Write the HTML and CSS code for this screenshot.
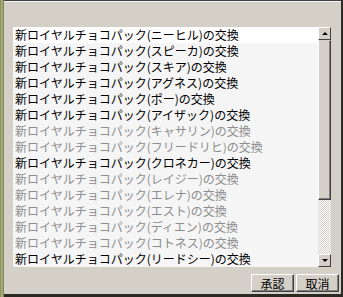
FILE: index.html
```html
<!DOCTYPE html>
<html lang="ja">
<head>
    <meta charset="UTF-8">
    <title>交換</title>
    <link rel="stylesheet" href="styles.css">
</head>
<body>
<div class="window">
    <div class="listbox">
        <ul class="items">
            <li class="item selected">新ロイヤルチョコパック(ニーヒル)の交換</li>
            <li class="item">新ロイヤルチョコパック(スピーカ)の交換</li>
            <li class="item">新ロイヤルチョコパック(スキア)の交換</li>
            <li class="item">新ロイヤルチョコパック(アグネス)の交換</li>
            <li class="item">新ロイヤルチョコパック(ポー)の交換</li>
            <li class="item">新ロイヤルチョコパック(アイザック)の交換</li>
            <li class="item disabled">新ロイヤルチョコパック(キャサリン)の交換</li>
            <li class="item disabled">新ロイヤルチョコパック(フリードリヒ)の交換</li>
            <li class="item">新ロイヤルチョコパック(クロネカー)の交換</li>
            <li class="item disabled">新ロイヤルチョコパック(レイジー)の交換</li>
            <li class="item disabled">新ロイヤルチョコパック(エレナ)の交換</li>
            <li class="item disabled">新ロイヤルチョコパック(エスト)の交換</li>
            <li class="item disabled">新ロイヤルチョコパック(ディエン)の交換</li>
            <li class="item disabled">新ロイヤルチョコパック(コトネス)の交換</li>
            <li class="item">新ロイヤルチョコパック(リードシー)の交換</li>
        </ul>
        <div class="scrollbar">
            <div class="arrow up"><span class="tri tri-up"></span></div>
            <div class="thumb"></div>
            <div class="track"></div>
            <div class="arrow down"><span class="tri tri-down"></span></div>
        </div>
    </div>
    <div class="actions">
        <button class="btn">承認</button>
        <button class="btn">取消</button>
    </div>
</div>
</body>
</html>
```

FILE: styles.css
```css
html, body {
    margin: 0;
    padding: 0;
}

body {
    width: 343px;
    height: 297px;
    overflow: hidden;
    background: linear-gradient(90deg, #7d8a4e 0, #b3b38a 2px, #6f7a44 4px, #2a2a22 4px);
    font-family: "Noto Sans CJK JP", "Noto Sans", sans-serif;
}

.window {
    margin-left: 4px;
    width: 337px;
    height: 294px;
    box-sizing: border-box;
    background-color: #d4d0c8;
    border-top: 1px solid #404040;
    box-shadow: inset 0 1px 0 #f4f3ef;
    padding: 26px 0 0 9px;
}

.listbox {
    display: flex;
    width: 318px;
    height: 240px;
}

.items {
    list-style: none;
    margin: 0;
    padding: 0;
    width: 305px;
    background-color: #f5f5f5;
}

.item {
    height: 16px;
    line-height: 16px;
    font-size: 12px;
    color: #000;
    padding-left: 2px;
    white-space: nowrap;
    overflow: hidden;
}

.item.selected {
    background-color: #fff;
}

.item.disabled {
    color: #8e8e8e;
}

.scrollbar {
    width: 13px;
    display: flex;
    flex-direction: column;
}

.arrow {
    height: 13px;
    box-sizing: border-box;
    background-color: #d4d0c8;
    border-top: 1px solid #fff;
    border-left: 1px solid #fff;
    border-right: 1px solid #404040;
    border-bottom: 1px solid #404040;
    display: flex;
    align-items: center;
    justify-content: center;
}

.tri {
    width: 0;
    height: 0;
    border-left: 3px solid transparent;
    border-right: 3px solid transparent;
}

.tri-up {
    border-bottom: 3px solid #000;
}

.tri-down {
    border-top: 3px solid #000;
}

.thumb {
    height: 160px;
    box-sizing: border-box;
    background-color: #d4d0c8;
    border-top: 1px solid #d4d0c8;
    border-left: 1px solid #fff;
    border-right: 1px solid #404040;
    border-bottom: 1px solid #404040;
    box-shadow: inset -1px -1px 0 #808080;
}

.track {
    flex: 1;
    background: repeating-conic-gradient(#fff 0 25%, #d4d0c8 0 50%) 0 0 / 2px 2px;
}

.actions {
    display: flex;
    justify-content: flex-end;
    gap: 2px;
    padding-right: 2px;
    margin-top: 7px;
}

.btn {
    width: 43px;
    height: 18px;
    padding: 0;
    margin: 0;
    box-sizing: border-box;
    background-color: #d4d0c8;
    border-top: 1px solid #fff;
    border-left: 1px solid #fff;
    border-right: 1px solid #404040;
    border-bottom: 1px solid #404040;
    box-shadow: inset -1px -1px 0 #808080;
    font-family: "Noto Sans CJK JP", "Noto Sans", sans-serif;
    font-size: 12px;
    line-height: 15px;
    color: #000;
}
```
